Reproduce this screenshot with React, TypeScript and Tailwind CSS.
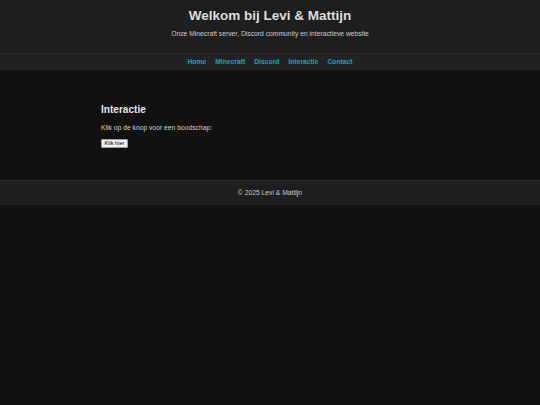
import React from "react";

export default function App() {
  const font = { fontFamily: '"Liberation Sans", Arial, sans-serif' };
  return (
    <div className="min-h-[405px] bg-[#111111]" style={font}>
      <header className="h-[53px] bg-[#1e1e1e] flex flex-col items-center">
        <h1 className="mt-[7.5px] text-[13.5px] leading-[16px] font-bold text-[#dddddd]">
          Welkom bij Levi &amp; Mattijn
        </h1>
        <p className="mt-[6px] text-[6.75px] leading-[8px] text-[#cccccc]">
          Onze Minecraft server, Discord community en interactieve website
        </p>
      </header>
      <nav className="h-[17px] bg-[#222222] border-t border-[#2a2a2a] flex items-center justify-center gap-[9px]">
        {["Home", "Minecraft", "Discord", "Interactie", "Contact"].map((l) => (
          <a key={l} className="text-[6.75px] leading-[8px] font-bold text-[#1da3bd]">
            {l}
          </a>
        ))}
      </nav>
      <main className="h-[110px] bg-[#111111]">
        <div className="mx-auto w-[338px] pt-[33.5px]">
          <h2 className="text-[10.1px] leading-[12px] font-bold text-[#e6e6e6]">Interactie</h2>
          <p className="mt-[8px] text-[6.75px] leading-[8px] text-[#d0d0d0]">
            Klik op de knop voor een boodschap:
          </p>
          <button className="mt-[7px] h-[9px] w-[27px] bg-[#f0f0f0] border border-[#999] rounded-[1px] text-[5.6px] leading-[7px] text-black flex items-center justify-center">
            Klik hier
          </button>
        </div>
      </main>
      <footer className="h-[25px] bg-[#1e1e1e] border-t border-[#2a2a2a] flex items-center justify-center">
        <span className="text-[6.75px] leading-[8px] text-[#cccccc]">© 2025 Levi &amp; Mattijn</span>
      </footer>
    </div>
  );
}
